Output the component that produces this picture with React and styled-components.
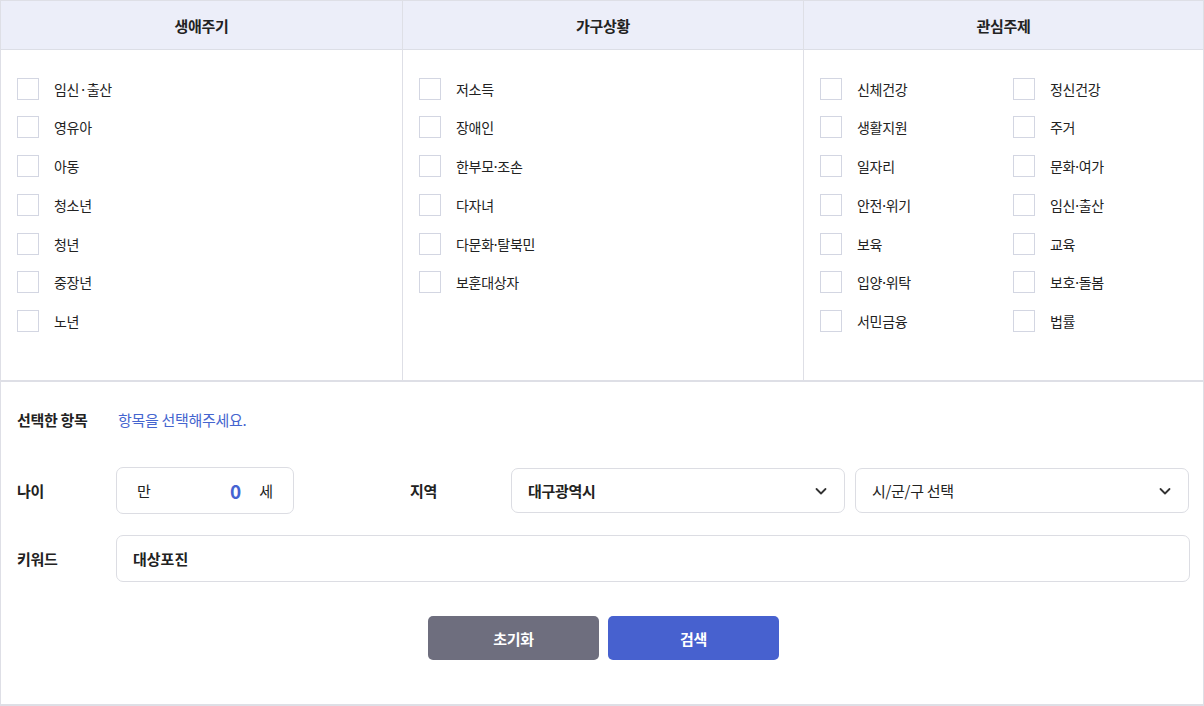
import React from "react";
import styled, { createGlobalStyle } from "styled-components";

const Global = createGlobalStyle`
  html, body { margin: 0; padding: 0; background: #fff; }
  body { font-family: "Noto Sans CJK KR", "Noto Sans", sans-serif; color: #222; }
  * { box-sizing: border-box; }
`;

const Panel = styled.div`
  width: 1204px;
  border: 1px solid #dedfe6;
  border-bottom-width: 2px;
  background: #fff;
`;

const Columns = styled.div`
  display: grid;
  grid-template-columns: 401px 401px minmax(0, 1fr);
  border-bottom: 2px solid #dedfe6;
`;

const Column = styled.div`
  display: flex;
  flex-direction: column;
  min-width: 0;
  border-left: ${(p) => (p.$first ? "none" : "1px solid #dedfe6")};
`;

const ColHead = styled.div`
  height: 49px;
  background: #eceef9;
  border-bottom: 1px solid #dcdee6;
  display: flex;
  align-items: center;
  justify-content: center;
  font-size: 15px;
  font-weight: 600;
  color: #222;
  letter-spacing: -0.3px;
`;

const List = styled.div`
  display: grid;
  grid-template-columns: ${(p) => (p.$two ? "193px 193px" : "1fr")};
  grid-auto-rows: 22px;
  row-gap: 16.8px;
  padding: 27.5px ${(p) => (p.$two ? 0 : 16)}px 0 16px;
  height: 330px;
`;

const Item = styled.label`
  display: flex;
  align-items: center;
  gap: 15px;
  font-size: 14px;
  color: #222;
  letter-spacing: -0.3px;
`;

const Dot = styled.span`
  margin: 0 ${(p) => (p.$wide ? 0 : -2)}px;
`;

const Box = styled.span`
  width: 22px;
  height: 22px;
  border: 1px solid #d3d6e2;
  background: #fff;
  flex: none;
`;

const Bottom = styled.div`
  padding: 27px 13px 44px 16px;
  display: flex;
  flex-direction: column;
`;

const Row = styled.div`
  display: flex;
  align-items: center;
  margin-top: ${(p) => p.$mt || 0}px;
`;

const Label = styled.div`
  width: ${(p) => p.$w || 99}px;
  flex: none;
  font-size: 15px;
  font-weight: 600;
  color: #222;
  letter-spacing: -0.3px;
  line-height: 22px;
`;

const Hint = styled.div`
  font-size: 15px;
  color: #4565cf;
  letter-spacing: -0.3px;
  line-height: 22px;
`;

const AgeBox = styled.div`
  width: 178px;
  height: 47px;
  border: 1px solid #dcdde3;
  border-radius: 7px;
  display: flex;
  align-items: center;
  padding: 0 20px 0 20px;
  font-size: 15px;
  color: #222;
  margin-right: 116px;
`;

const AgeNum = styled.span`
  margin-left: auto;
  margin-right: 18px;
  font-size: 19px;
  font-weight: 700;
  color: #4563d2;
`;

const Select = styled.div`
  width: 334px;
  height: 45px;
  border: 1px solid #dcdde3;
  border-radius: 7px;
  display: flex;
  align-items: center;
  justify-content: space-between;
  padding: 0 16px 0 16px;
  font-size: 15px;
  font-weight: ${(p) => (p.$bold ? 600 : 400)};
  color: #222;
  margin-left: ${(p) => p.$ml || 0}px;
  letter-spacing: -0.3px;
`;

const TextInput = styled.div`
  width: 1075px;
  height: 47px;
  border: 1px solid #dcdde3;
  border-radius: 7px;
  display: flex;
  align-items: center;
  padding: 0 16px;
  font-size: 15px;
  font-weight: 600;
  color: #222;
`;

const Buttons = styled.div`
  display: flex;
  justify-content: center;
  gap: 9px;
  margin-top: 34px;
`;

const Btn = styled.button`
  width: 171px;
  height: 44px;
  border: none;
  border-radius: 5px;
  background: ${(p) => (p.$primary ? "#4761cf" : "#6e6e7e")};
  color: #fff;
  font-family: inherit;
  font-size: 15px;
  font-weight: 700;
  letter-spacing: -0.3px;
`;

const Chevron = () => (
  <svg width="14" height="14" viewBox="0 0 14 14">
    <polyline points="2.5,5 7,9.5 11.5,5" fill="none" stroke="#333" strokeWidth="1.8" strokeLinecap="round" strokeLinejoin="round" />
  </svg>
);

const life = ["임신·출산", "영유아", "아동", "청소년", "청년", "중장년", "노년"];
const house = ["저소득", "장애인", "한부모·조손", "다자녀", "다문화·탈북민", "보훈대상자"];
const topics = [
  "신체건강", "정신건강", "생활지원", "주거", "일자리", "문화·여가", "안전·위기", "임신·출산",
  "보육", "교육", "입양·위탁", "보호·돌봄", "서민금융", "법률",
];

const renderLabel = (t, wide) => {
  const parts = t.split("·");
  if (parts.length === 1) return t;
  return (
    <span>
      {parts[0]}
      <Dot $wide={wide}>·</Dot>
      {parts[1]}
    </span>
  );
};

const Items = ({ list, wide }) =>
  list.map((t) => (
    <Item key={t}>
      <Box />
      {renderLabel(t, wide)}
    </Item>
  ));

export default function App() {
  return (
    <>
      <Global />
      <Panel>
        <Columns>
          <Column $first>
            <ColHead>생애주기</ColHead>
            <List><Items list={life} wide /></List>
          </Column>
          <Column>
            <ColHead>가구상황</ColHead>
            <List><Items list={house} /></List>
          </Column>
          <Column>
            <ColHead>관심주제</ColHead>
            <List $two><Items list={topics} /></List>
          </Column>
        </Columns>
        <Bottom>
          <Row>
            <Label $w={101}>선택한 항목</Label>
            <Hint>항목을 선택해주세요.</Hint>
          </Row>
          <Row $mt={36}>
            <Label>나이</Label>
            <AgeBox>
              만<AgeNum>0</AgeNum>세
            </AgeBox>
            <Label $w={101}>지역</Label>
            <Select $bold>대구광역시<Chevron /></Select>
            <Select $ml={10}>시/군/구 선택<Chevron /></Select>
          </Row>
          <Row $mt={21}>
            <Label>키워드</Label>
            <TextInput>대상포진</TextInput>
          </Row>
          <Buttons>
            <Btn>초기화</Btn>
            <Btn $primary>검색</Btn>
          </Buttons>
        </Bottom>
      </Panel>
    </>
  );
}
